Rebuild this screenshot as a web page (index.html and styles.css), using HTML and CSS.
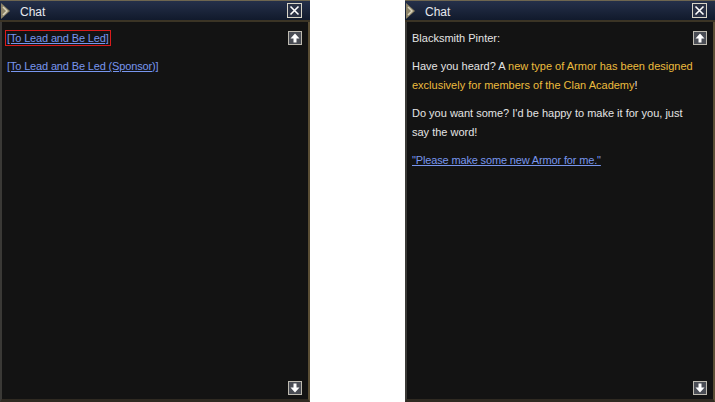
FILE: index.html
```html
<!DOCTYPE html>
<html>
<head>
<meta charset="utf-8">
<link rel="stylesheet" href="styles.css">
</head>
<body>
<div class="page">
  <div class="panel">
    <div class="titlebar">
      <svg class="chev" width="12" height="20" viewBox="0 0 12 20"><path d="M1 2 L10 10 L1 18 Z" fill="#8d8468"/><path d="M3 6 L7 10 L3 14" fill="none" stroke="#d9d3bb" stroke-width="1.5"/></svg>
      <span class="title">Chat</span>
      <span class="close"><svg width="13" height="13" viewBox="0 0 13 13"><path d="M2.5 2.5 L10.5 10.5 M10.5 2.5 L2.5 10.5" stroke="#fff" stroke-width="1.6"/></svg></span>
    </div>
    <div class="body">
      <div class="content">
        <p class="para"><a class="link selected">[To Lead and Be Led]</a></p>
        <p class="para"><a class="link">[To Lead and Be Led (Sponsor)]</a></p>
      </div>
      <div class="scroll">
        <span class="arrow"><svg width="12" height="12" viewBox="0 0 12 12"><path d="M6 1.5 L10.5 6.5 L7.5 6.5 L7.5 10.5 L4.5 10.5 L4.5 6.5 L1.5 6.5 Z" fill="#fff"/></svg></span>
        <span class="arrow"><svg width="12" height="12" viewBox="0 0 12 12"><path d="M6 10.5 L10.5 5.5 L7.5 5.5 L7.5 1.5 L4.5 1.5 L4.5 5.5 L1.5 5.5 Z" fill="#fff"/></svg></span>
      </div>
    </div>
  </div>
  <div class="panel">
    <div class="titlebar">
      <svg class="chev" width="12" height="20" viewBox="0 0 12 20"><path d="M1 2 L10 10 L1 18 Z" fill="#8d8468"/><path d="M3 6 L7 10 L3 14" fill="none" stroke="#d9d3bb" stroke-width="1.5"/></svg>
      <span class="title">Chat</span>
      <span class="close"><svg width="13" height="13" viewBox="0 0 13 13"><path d="M2.5 2.5 L10.5 10.5 M10.5 2.5 L2.5 10.5" stroke="#fff" stroke-width="1.6"/></svg></span>
    </div>
    <div class="body">
      <div class="content">
        <p class="para">Blacksmith Pinter:</p>
        <p class="para">Have you heard? A <span class="hl">new type of Armor has been designed exclusively for members of the Clan Academy</span>!</p>
        <p class="para">Do you want some? I'd be happy to make it for you, just say the word!</p>
        <p class="para"><a class="link">"Please make some new Armor for me."</a></p>
      </div>
      <div class="scroll">
        <span class="arrow"><svg width="12" height="12" viewBox="0 0 12 12"><path d="M6 1.5 L10.5 6.5 L7.5 6.5 L7.5 10.5 L4.5 10.5 L4.5 6.5 L1.5 6.5 Z" fill="#fff"/></svg></span>
        <span class="arrow"><svg width="12" height="12" viewBox="0 0 12 12"><path d="M6 10.5 L10.5 5.5 L7.5 5.5 L7.5 1.5 L4.5 1.5 L4.5 5.5 L1.5 5.5 Z" fill="#fff"/></svg></span>
      </div>
    </div>
  </div>
</div>
</body>
</html>
```
FILE: styles.css
```css
html, body {
  margin: 0;
  padding: 0;
  background: #ffffff;
}
.page {
  display: flex;
  gap: 95px;
  width: 715px;
  height: 402px;
}
.panel {
  width: 310px;
  height: 402px;
  display: flex;
  flex-direction: column;
  background: #131313;
  border-left: 2px solid #3a3936;
  border-right: 2px solid #5a4e35;
  border-bottom: 3px solid #2f2a22;
  box-sizing: border-box;
  font-family: "Liberation Sans", sans-serif;
  font-size: 11px;
}
.titlebar {
  height: 22px;
  display: flex;
  align-items: center;
  background: linear-gradient(#25304a, #111a2c);
  border-top: 1px solid #6e6650;
  border-bottom: 2px solid #3b3425;
  box-sizing: border-box;
  margin-left: -2px;
  margin-right: -2px;
}
.chev {
  flex: none;
}
.title {
  margin-left: 8px;
  margin-top: 2px;
  color: #e6e8ee;
  font-size: 12px;
  font-family: "Liberation Sans", sans-serif;
}
.close {
  margin-left: auto;
  margin-right: 8px;
  width: 13px;
  height: 13px;
  border: 1px solid #d8d5c8;
  background: #2a3144;
  display: flex;
}
.body {
  flex: 1;
  display: flex;
  min-height: 0;
}
.content {
  flex: 1;
  padding: 7px 0 0 5px;
}
.para {
  margin: 0 0 9px 0;
  line-height: 19px;
  color: #e4e4e4;
  font-family: "Liberation Sans", sans-serif;
  font-size: 11px;
}
.link {
  color: #7896ee;
  text-decoration: underline;
  letter-spacing: -0.15px;
}
.selected {
  outline: 1px solid #d81c1c;
  outline-offset: 1px;
}
.hl {
  color: #ecbc3e;
}
.scroll {
  width: 20px;
  flex: none;
  display: flex;
  flex-direction: column;
  justify-content: space-between;
  align-items: flex-start;
  padding: 9px 0 4px 0;
}
.arrow {
  width: 12px;
  height: 12px;
  border: 1px solid #bdbab0;
  background: #4a4d55;
  display: flex;
}
```
